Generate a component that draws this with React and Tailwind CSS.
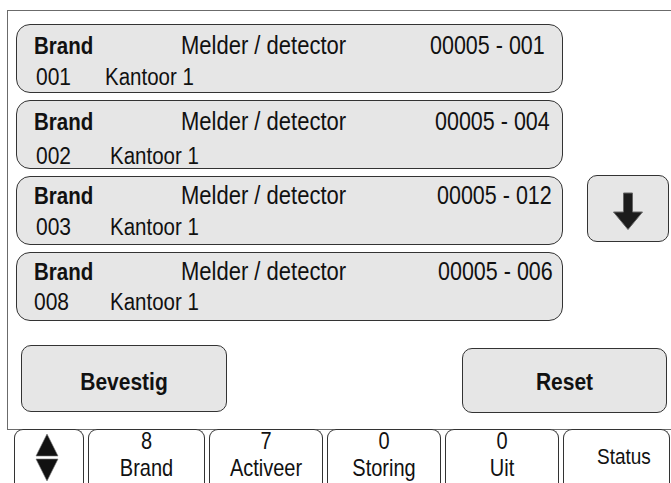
const ALARMS = [
  { code: "001", zone: "Kantoor 1", addr: "00005 - 001", pad: "pt-[9px]", gap: "gap-[7px]", midW: "w-[249px]", codePl: "pl-[19px]", codeW: "w-[88px]" },
  { code: "002", zone: "Kantoor 1", addr: "00005 - 004", pad: "pt-[9px]", gap: "gap-[10px]", midW: "w-[254px]", codePl: "pl-[19px]", codeW: "w-[93px]" },
  { code: "003", zone: "Kantoor 1", addr: "00005 - 012", pad: "pt-[7px]", gap: "gap-[7px]", midW: "w-[256px]", codePl: "pl-[19px]", codeW: "w-[93px]" },
  { code: "008", zone: "Kantoor 1", addr: "00005 - 006", pad: "pt-[7px]", gap: "gap-[6px]", midW: "w-[257px]", codePl: "pl-[17px]", codeW: "w-[93px]" },
];

const TABS = [
  { count: "8", label: "Brand", width: "w-[117px]" },
  { count: "7", label: "Activeer", width: "w-[114px]" },
  { count: "0", label: "Storing", width: "w-[114px]" },
  { count: "0", label: "Uit", width: "w-[114px]" },
];

// the panel font is drawn tall and narrow
function T({ children, className = "" }) {
  return <span className={`inline-block [transform:scaleY(1.18)] ${className}`}>{children}</span>;
}

function AlarmCard({ alarm }) {
  return (
    <div className={`h-[69px] rounded-[14px] border border-[#333] bg-[#e6e6e6] flex flex-col ${alarm.pad} ${alarm.gap}`}>
      <div className="flex h-[24px] text-[21px] leading-[24px]">
        <div className="pl-[17px] w-[164px] shrink-0">
          <T className="font-bold text-[20.5px]">Brand</T>
        </div>
        <div className={`${alarm.midW} shrink-0`}>
          <T className="text-[22px]">Melder / detector</T>
        </div>
        <div className="whitespace-nowrap">
          <T className="text-[21.5px]">{alarm.addr}</T>
        </div>
      </div>
      <div className="flex h-[24px] text-[21px] leading-[24px]">
        <div className={`${alarm.codePl} ${alarm.codeW} shrink-0`}>
          <T>{alarm.code}</T>
        </div>
        <div>
          <T className="text-[20.5px]">{alarm.zone}</T>
        </div>
      </div>
    </div>
  );
}

function DownArrow() {
  return (
    <svg width="32" height="39" viewBox="0 0 32 39">
      <path d="M11.5 1 H20.5 V20 H30.5 L16 37.5 L1.5 20 H11.5 Z" fill="#1c1c1c" stroke="#666" strokeWidth="1" strokeLinejoin="round" />
    </svg>
  );
}

function UpDown() {
  return (
    <svg width="24" height="48" viewBox="0 0 24 48">
      <polygon points="12,0 23,22 1,22" fill="#111" stroke="#777" strokeWidth="0.6" />
      <polygon points="1,25 23,25 12,47" fill="#111" stroke="#777" strokeWidth="0.6" />
    </svg>
  );
}

export default function App() {
  return (
    <div className="w-[671px] h-[483px] overflow-hidden bg-white text-[#111] font-['Liberation_Sans',Arial,sans-serif]">
      <div className="ml-[7px] mt-[10px] h-[420px] w-[690px] border border-r-0 border-[#6b6b6b]">
        <div className="flex pt-[13px] pl-[8px]">
          <div className="flex flex-col gap-[7px] w-[547px] shrink-0">
            {ALARMS.map((a) => (
              <AlarmCard key={a.code} alarm={a} />
            ))}
          </div>
          <div className="ml-[24px] mt-[151px] w-[82px] h-[67px] shrink-0 rounded-[10px] border border-[#333] bg-[#e6e6e6] flex items-center justify-center pt-[5px]">
            <DownArrow />
          </div>
        </div>
        <div className="flex justify-between items-start w-[659px] pl-[13px] mt-[24px]">
          <button className="w-[206px] h-[67px] rounded-[10px] border border-[#333] bg-[#e6e6e6] flex items-center justify-center pt-[7px] text-[21px] leading-[24px]">
            <T className="font-bold">Bevestig</T>
          </button>
          <button className="mt-[3px] w-[205px] h-[65px] rounded-[10px] border border-[#333] bg-[#e6e6e6] flex items-center justify-center pt-[3px] text-[21px] leading-[24px]">
            <T className="font-bold">Reset</T>
          </button>
        </div>
      </div>
      <div className="flex gap-[4px] pl-[14px] -mt-px">
        <div className="w-[70px] h-[60px] rounded-t-[9px] border border-b-0 border-[#333] bg-white flex justify-center pt-[4px] pr-[4px]">
          <UpDown />
        </div>
        {TABS.map((t) => (
          <div key={t.label} className={`${t.width} h-[60px] rounded-t-[9px] border border-b-0 border-[#333] bg-white flex flex-col items-center gap-[5px] text-[20px] leading-[22px]`}>
            <T>{t.count}</T>
            <T>{t.label}</T>
          </div>
        ))}
        <div className="w-[107px] h-[60px] rounded-t-[9px] border border-b-0 border-[#333] bg-white flex pl-[33px] pt-[18px] text-[19px] leading-[22px]">
          <T>Status</T>
        </div>
      </div>
    </div>
  );
}
